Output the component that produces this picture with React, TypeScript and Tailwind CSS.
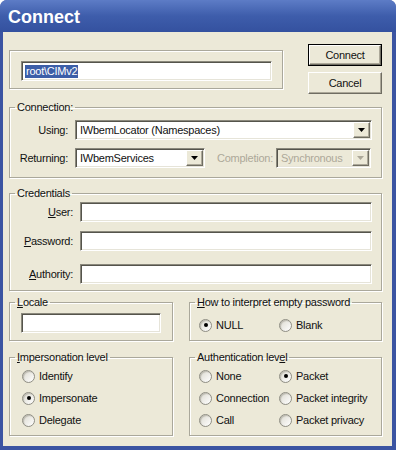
import React from 'react';

const sunken =
  'border border-t-[#8a887c] border-l-[#8a887c] border-b-white border-r-white shadow-[inset_1px_1px_0_#55544c,inset_-1px_-1px_0_#e6e4d9]';
const raised =
  'border border-t-white border-l-white border-b-[#6f6d62] border-r-[#6f6d62] shadow-[inset_-1px_-1px_0_#aca899]';
const etched = 'border border-[#aaa89b] shadow-[1px_1px_0_#fff,inset_1px_1px_0_#fff]';

function Group({ legend, className = '', children }: { legend: React.ReactNode; className?: string; children: React.ReactNode }) {
  return (
    <fieldset className={`${etched} ${className}`}>
      <legend className="ml-[5px] px-[2px] leading-[14px]">{legend}</legend>
      {children}
    </fieldset>
  );
}

function Arrow({ disabled }: { disabled?: boolean }) {
  return (
    <div className={`flex h-[16px] w-[17px] items-center justify-center bg-[#ece9d8] ${raised}`}>
      <svg width="7" height="4" viewBox="0 0 7 4">
        <path d="M0 0h7L3.5 4z" fill={disabled ? '#aca899' : '#000'} />
      </svg>
    </div>
  );
}

function Combo({ text, disabled, className = '' }: { text: string; disabled?: boolean; className?: string }) {
  return (
    <div
      className={`flex h-[20px] items-center justify-between pl-[4px] pr-[1px] ${sunken} ${
        disabled ? 'bg-[#ece9d8] text-[#aca899]' : 'bg-white'
      } ${className}`}
    >
      <span>{text}</span>
      <Arrow disabled={disabled} />
    </div>
  );
}

function Radio({ checked, children, className = '' }: { checked?: boolean; children: React.ReactNode; className?: string }) {
  return (
    <div className={`flex h-[16px] items-center gap-[4px] ${className}`}>
      <span className="flex h-[13px] w-[13px] items-center justify-center rounded-full border border-[#8f8e84] bg-linear-to-br from-[#dcdad0] to-white shadow-[inset_1px_1px_1px_#bcbab0]">
        {checked && <span className="h-[4px] w-[4px] rounded-full bg-black" />}
      </span>
      <span>{children}</span>
    </div>
  );
}

function U({ children }: { children: React.ReactNode }) {
  return <span className="underline underline-offset-[1px]">{children}</span>;
}

export default function App() {
  return (
    <div className="flex h-[450px] w-[396px] flex-col overflow-hidden rounded-t-[7px] bg-[#3b54a2] font-['Liberation_Sans',Arial,sans-serif] text-[11px] tracking-[-0.25px] text-[#111]">
      <div className="flex h-[32px] items-center bg-linear-to-b from-[#5d7cc6] via-[#3e5dab] to-[#34519f] px-[8px] pt-[2px]">
        <span className="text-[18px] font-bold tracking-normal text-white">Connect</span>
      </div>

      <div className="mb-[4px] ml-[3px] mr-[4px] flex flex-1 flex-col bg-[#ece9d8] pl-[6px] pr-[10px] pt-[12px]">
        <div className="flex items-start justify-between">
          <div className={`mt-[6px] h-[39px] w-[274px] px-[11px] pt-[10px] ${etched}`}>
            <div className={`flex h-[20px] w-[251px] items-center bg-white pl-[3px] ${sunken}`}>
              <span className="bg-[#3c5ea8] px-px leading-[13px] text-white">root\CIMv2</span>
            </div>
          </div>
          <div className="flex w-[74px] flex-col gap-[6px]">
            <button className="h-[22px] border border-black bg-[#ece9d8]">
              <div className={`flex h-full items-center justify-center ${raised}`}>Connect</div>
            </button>
            <button className={`flex h-[22px] items-center justify-center bg-[#ece9d8] ${raised}`}>Cancel</button>
          </div>
        </div>

        <Group legend="Connection:" className="mt-[6px] pb-[9px] pt-[6px]">
          <div className="flex items-center">
            <span className="w-[58px] text-right">Using:</span>
            <Combo text="IWbemLocator (Namespaces)" className="ml-[7px] w-[297px]" />
          </div>
          <div className="mt-[8px] flex items-center">
            <span className="w-[58px] text-right">Returning:</span>
            <Combo text="IWbemServices" className="ml-[7px] w-[130px]" />
            <span className="ml-[12px] w-[59px] text-[#aca899]">Completion:</span>
            <Combo text="Synchronous" disabled className="w-[95px]" />
          </div>
        </Group>

        <Group legend="Credentials" className="mt-[8px] pb-[6px] pt-[2px]">
          <div className="flex items-center">
            <span className="w-[63px] text-right">
              <U>U</U>ser:
            </span>
            <div className={`ml-[7px] h-[20px] w-[292px] bg-white ${sunken}`} />
          </div>
          <div className="mt-[9px] flex items-center">
            <span className="w-[63px] text-right">
              <U>P</U>assword:
            </span>
            <div className={`ml-[7px] h-[20px] w-[292px] bg-white ${sunken}`} />
          </div>
          <div className="mt-[13px] flex items-center">
            <span className="w-[63px] text-right">
              <U>A</U>uthority:
            </span>
            <div className={`ml-[7px] h-[20px] w-[292px] bg-white ${sunken}`} />
          </div>
        </Group>

        <div className="mt-[4px] grid grid-cols-[164px_193px] gap-x-[16px]">
          <Group
            legend={
              <>
                <U>L</U>ocale
              </>
            }
            className="pb-[7px] pt-[4px]"
          >
            <div className={`ml-[11px] h-[20px] w-[140px] bg-white ${sunken}`} />
          </Group>
          <Group
            legend={
              <>
                <U>H</U>ow to interpret empty password
              </>
            }
            className="pb-[7px] pt-[8px]"
          >
            <div className="grid grid-cols-[80px_1fr] pl-[9px]">
              <Radio checked>NULL</Radio>
              <Radio>Blank</Radio>
            </div>
          </Group>

          <Group
            legend={
              <>
                <U>I</U>mpersonation level
              </>
            }
            className="mt-[9px] pb-[7px] pt-[4px]"
          >
            <div className="flex flex-col gap-[6px] pl-[12px]">
              <Radio>Identify</Radio>
              <Radio checked>Impersonate</Radio>
              <Radio>Delegate</Radio>
            </div>
          </Group>
          <Group
            legend={
              <>
                Authentication lev<U>e</U>l
              </>
            }
            className="mt-[9px] pb-[7px] pt-[4px]"
          >
            <div className="grid grid-cols-[80px_1fr] gap-y-[6px] pl-[9px]">
              <Radio>None</Radio>
              <Radio checked>Packet</Radio>
              <Radio>Connection</Radio>
              <Radio>Packet integrity</Radio>
              <Radio>Call</Radio>
              <Radio>Packet privacy</Radio>
            </div>
          </Group>
        </div>
      </div>
    </div>
  );
}
